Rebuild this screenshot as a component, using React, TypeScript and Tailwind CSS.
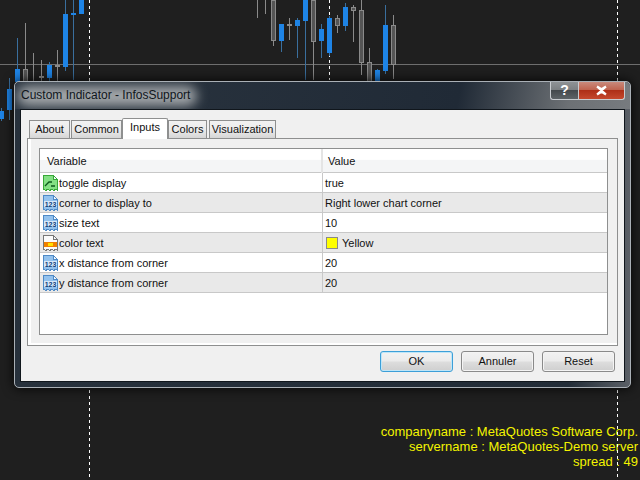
import React from "react";

type Candle = { x: number; c: "b" | "g"; wick: [number, number]; body?: [number, number] };

const candles: Candle[] = [
  { x: 1, c: "b", wick: [108, 121], body: [111, 119] },
  { x: 9, c: "b", wick: [78, 120], body: [89, 110] },
  { x: 17, c: "b", wick: [38, 82], body: [69, 82] },
  { x: 25, c: "g", wick: [23, 82], body: [69, 82] },
  { x: 33, c: "g", wick: [53, 82] },
  { x: 41, c: "g", wick: [60, 82], body: [76, 78] },
  { x: 49, c: "b", wick: [62, 82], body: [65, 78] },
  { x: 57, c: "g", wick: [50, 82], body: [65, 67] },
  { x: 65, c: "b", wick: [0, 71], body: [14, 67] },
  { x: 73, c: "b", wick: [0, 80], body: [13, 15] },
  { x: 81, c: "b", wick: [0, 14], body: [0, 14] },
  { x: 257, c: "g", wick: [0, 18] },
  { x: 265, c: "g", wick: [0, 14] },
  { x: 273, c: "g", wick: [0, 46], body: [0, 41] },
  { x: 281, c: "b", wick: [24, 52], body: [24, 41] },
  { x: 289, c: "g", wick: [18, 40], body: [24, 26] },
  { x: 297, c: "b", wick: [18, 58], body: [20, 26] },
  { x: 305, c: "b", wick: [0, 80], body: [0, 21] },
  { x: 313, c: "g", wick: [0, 80], body: [0, 42] },
  { x: 321, c: "b", wick: [24, 58], body: [29, 41] },
  { x: 329, c: "b", wick: [16, 56], body: [18, 53] },
  { x: 337, c: "g", wick: [15, 33], body: [18, 26] },
  { x: 345, c: "b", wick: [3, 31], body: [7, 26] },
  { x: 353, c: "g", wick: [5, 42], body: [7, 11] },
  { x: 361, c: "g", wick: [0, 75], body: [10, 63] },
  { x: 369, c: "g", wick: [48, 82], body: [62, 82] },
  { x: 377, c: "b", wick: [69, 82], body: [70, 82] },
  { x: 385, c: "b", wick: [5, 74], body: [25, 71] },
  { x: 393, c: "g", wick: [15, 79], body: [25, 65] },
];

function Chart() {
  return (
    <svg width="640" height="480" className="absolute inset-0" shapeRendering="crispEdges">
      <rect x="0" y="64" width="640" height="1" fill="#6e6e6e" />
      <line x1="89.5" y1="0" x2="89.5" y2="480" stroke="#fff" strokeDasharray="3 3" />
      <line x1="329.5" y1="0" x2="329.5" y2="80" stroke="#fff" strokeDasharray="3 3" />
      <line x1="617.5" y1="0" x2="617.5" y2="480" stroke="#fff" strokeDasharray="3 3" />
      {candles.map((k, i) => {
        const col = k.c === "b" ? "#1e84e6" : "#8a8a8a";
        const wick = k.c === "b" ? "#3a6f9e" : "#8a8a8a";
        return (
          <g key={i}>
            <rect x={k.x} y={k.wick[0]} width="1" height={k.wick[1] - k.wick[0]} fill={wick} />
            {k.body && k.c === "b" && (
              <rect x={k.x - 2} y={k.body[0]} width="5" height={k.body[1] - k.body[0]} fill={col} />
            )}
            {k.body && k.c === "g" && (
              <rect
                x={k.x - 1.5}
                y={k.body[0] + 0.5}
                width="4"
                height={k.body[1] - k.body[0] - 1}
                fill="#555"
                stroke={col}
                strokeWidth="1"
              />
            )}
          </g>
        );
      })}
    </svg>
  );
}

function DocShape({ fill, edge, children }: { fill: string; edge: string; children?: React.ReactNode }) {
  return (
    <svg width="17" height="18" viewBox="0 0 17 18" className="shrink-0" shapeRendering="crispEdges">
      <path
        d="M1.5 1.5H11.5L15.5 5.5V16.5L14 15L12 16.5L10 15L8 16.5L6 15L4 16.5L1.5 15Z"
        fill={fill}
        stroke={edge}
      />
      <path d="M11.5 1.5V5.5H15.5Z" fill="#f4f9fe" stroke={edge} />
      {children}
    </svg>
  );
}

function IntIcon() {
  return (
    <DocShape fill="#93c2ee" edge="#4f8ac6">
      <rect x="2" y="7" width="13" height="6" fill="#d6e8f9" />
      <text x="8.5" y="12.6" textAnchor="middle" fontSize="7" fontWeight="700" fontFamily="Liberation Sans, sans-serif" fill="#0f3f7a">
        123
      </text>
    </DocShape>
  );
}

function BoolIcon() {
  return (
    <DocShape fill="#84e084" edge="#38a838">
      <path d="M3 12L7 8H10M9 12H13" fill="none" stroke="#0c5a1c" strokeWidth="1.3" shapeRendering="auto" />
    </DocShape>
  );
}

function ColorIcon() {
  return (
    <DocShape fill="#fbfbfb" edge="#777">
      <rect x="2" y="8" width="13" height="5" fill="#f08000" />
      <rect x="6" y="9" width="5" height="3" fill="#ffe000" />
    </DocShape>
  );
}

const rows: { icon: React.ReactNode; name: string; value: React.ReactNode }[] = [
  { icon: <BoolIcon />, name: "toggle display", value: "true" },
  { icon: <IntIcon />, name: "corner to display to", value: "Right lower chart corner" },
  { icon: <IntIcon />, name: "size text", value: "10" },
  {
    icon: <ColorIcon />,
    name: "color text",
    value: (
      <span className="flex items-center gap-[4px]">
        <span className="ml-px h-[12px] w-[12px] border border-[#8a8a8a] bg-[#ffff00]" />
        Yellow
      </span>
    ),
  },
  { icon: <IntIcon />, name: "x distance from corner", value: "20" },
  { icon: <IntIcon />, name: "y distance from corner", value: "20" },
];

const tabs = [
  { label: "About", cls: "ml-0 w-[41px]" },
  { label: "Common", cls: "ml-px w-[51px]" },
  { label: "Inputs", active: true, cls: "" },
  { label: "Colors", cls: "ml-0 w-[39px]" },
  { label: "Visualization", cls: "ml-[2px] w-[67px]" },
];

function Btn({ label, primary }: { label: string; primary?: boolean }) {
  return (
    <div
      className={
        "flex h-[21px] w-[73px] items-center justify-center rounded-[3px] border bg-[linear-gradient(#f2f2f2_0%,#ebebeb_48%,#dddddd_52%,#cfcfcf_100%)] text-[#111] " +
        (primary
          ? "border-[#3c9fd8] shadow-[inset_0_0_0_1px_#bfe6f8]"
          : "border-[#8a8a8a] shadow-[inset_0_0_0_1px_#f4f4f4]")
      }
    >
      {label}
    </div>
  );
}

export default function App() {
  return (
    <div className="relative h-[480px] w-[640px] overflow-hidden bg-[#1f1f1f] font-['Liberation_Sans',sans-serif] text-[11px] text-[#111]">
      <div className="absolute right-[2px] top-[424px] text-right text-[13px] leading-[15px] text-[#f4f400]">
        <div>companyname : MetaQuotes Software Corp.</div>
        <div>servername : MetaQuotes-Demo server</div>
        <div>spread : 49</div>
      </div>
      <Chart />

      {/* dialog window */}
      <div className="absolute left-[14px] top-[81px] flex h-[307px] w-[617px] flex-col rounded-[5px] border border-[#aab0b6] bg-[linear-gradient(90deg,#27313c_0%,#222c37_90%,#5b6067_100%)] shadow-[0_0_12px_rgba(0,0,0,0.95)]">
        {/* title bar */}
        <div className="relative h-[27px] shrink-0 overflow-hidden rounded-t-[5px] bg-[linear-gradient(100deg,#2b3540_0%,#202a36_72%,#6d7175_90%,#777b7f_100%)]">
          <div className="absolute left-[2px] top-[4px] h-[20px] w-[180px] rounded-full bg-[#a4a8ab] blur-[6px]" />
          <div className="absolute left-[6px] top-[4px] text-[12px] leading-[18px] text-[#10161c]">
            Custom Indicator - InfosSupport
          </div>
          <div className="absolute right-[5px] top-0 flex h-[18px]">
            <div className="flex w-[28px] items-center justify-center rounded-bl-[3px] border-b border-l border-[#c8ccd0] bg-[linear-gradient(#8e9295_0%,#7c8083_45%,#44494d_50%,#5d6367_100%)] text-[14px] font-bold text-white">
              ?
            </div>
            <div className="flex w-[47px] items-center justify-center rounded-br-[3px] border-b border-l border-r border-[#c8ccd0] bg-[linear-gradient(#c98a7c_0%,#bf6450_45%,#ae2f17_50%,#c5492e_100%)]">
              <svg width="13" height="11" viewBox="0 0 13 11">
                <path d="M2 1.5L6.5 4.2L11 1.5M2 9.5L6.5 6.8L11 9.5M2 1.5L11 9.5M11 1.5L2 9.5" stroke="#fff" strokeWidth="2.2" fill="none" />
              </svg>
            </div>
          </div>
        </div>

        {/* client area */}
        <div className="mx-[5px] h-[273px] border border-[#10161c] bg-[#f0f0f0]">
          <div className="flex h-[28px] items-end pl-[8px]">
            {tabs.map((t) =>
              t.active ? (
                <div
                  key={t.label}
                  className="relative z-10 -mb-px flex h-[21px] w-[46px] items-center justify-center rounded-t-[2px] border border-b-0 border-[#8e8f8f] bg-white pb-[3px] text-[#111]"
                >
                  {t.label}
                </div>
              ) : (
                <div
                  key={t.label}
                  className={
                    "flex h-[18px] items-center justify-center border border-b-0 border-[#8e8f8f] bg-[linear-gradient(#f2f2f2_0%,#ebebeb_50%,#d6d6d6_100%)] " +
                    t.cls
                  }
                >
                  {t.label}
                </div>
              )
            )}
          </div>

          {/* tab page */}
          <div className="ml-[6px] h-[208px] w-[591px] border border-[#8e8f8f] bg-[#f0f0f0] shadow-[inset_3px_0_0_#fff,inset_0_-2px_0_#fff]">
            <div className="ml-[11px] mt-[9px] h-[187px] w-[569px] border border-[#8e8f8f] bg-white">
              <div className="grid h-[24px] grid-cols-[283px_1fr] items-center border-b border-[#c8c8c8] bg-[linear-gradient(#ffffff_0%,#ffffff_45%,#f4f5f6_50%,#f4f5f6_100%)]">
                <div className="h-full border-r-2 border-[#e4e4e4] pl-[7px] leading-[24px]">Variable</div>
                <div className="pl-[5px]">Value</div>
              </div>
              {rows.map((r, i) => (
                <div
                  key={r.name}
                  className={
                    "grid h-[20px] grid-cols-[283px_1fr] items-center border-b border-[#c8c8c8] " +
                    (i % 2 === 1 ? "bg-[#e9e9e9]" : "bg-white")
                  }
                >
                  <div className="flex h-full items-center border-r border-[#c8c8c8] pl-[2px]">
                    {r.icon}
                    <span className="pt-px">{r.name}</span>
                  </div>
                  <div className="pl-[2px] pt-px">{r.value}</div>
                </div>
              ))}
            </div>
          </div>

          {/* buttons */}
          <div className="mr-[9px] mt-[5px] flex justify-end gap-[8px]">
            <Btn label="OK" primary />
            <Btn label="Annuler" />
            <Btn label="Reset" />
          </div>
        </div>
      </div>
    </div>
  );
}
